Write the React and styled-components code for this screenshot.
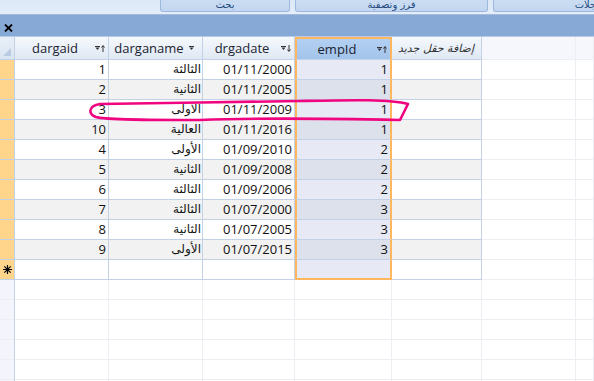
import React from "react";
import styled, { createGlobalStyle } from "styled-components";

const GlobalStyle = createGlobalStyle`
  html, body { margin: 0; padding: 0; background: #fff; overflow: hidden; }
  body { font-family: "Open Sans", "DejaVu Sans", sans-serif; }
`;

const COLS = "15px 94px 94px 92px 97px 90px 94px 1fr";
const LINE = "#c3d1e6";
const FAINT = "#eceef3";
const ORANGE = "#ffb65c";

const rows = [
  [1, "الثالثة", "01/11/2000", 1],
  [2, "الثانية", "01/11/2005", 1],
  [3, "الاولى", "01/11/2009", 1],
  [10, "العالية", "01/11/2016", 1],
  [4, "الأولى", "01/09/2010", 2],
  [5, "الثانية", "01/09/2008", 2],
  [6, "الثالثة", "01/09/2006", 2],
  [7, "الثالثة", "01/07/2000", 3],
  [8, "الثانية", "01/07/2005", 3],
  [9, "الأولى", "01/07/2015", 3],
];

const Page = styled.div`
  position: relative;
  width: 594px;
  height: 381px;
  overflow: hidden;
  background: #fff;
`;

const Ribbon = styled.div`
  display: flex;
  gap: 5px;
  height: 14px;
  padding-left: 160px;
  background: linear-gradient(#dbe8f7, #e4eefa);
  border-bottom: 1px solid #a4bad8;
`;

const RibbonTab = styled.div`
  flex-shrink: 0;
  width: ${p => p.$w}px;
  height: 12px;
  box-sizing: border-box;
  background: linear-gradient(#cbddf2, #c2d7f0);
  border: 1px solid #9db8dc;
  border-top: none;
  border-radius: 0 0 3px 3px;
  color: #24497f;
  font-family: "DejaVu Sans", sans-serif;
  font-size: 10px;
  line-height: 10px;
  text-align: center;
  direction: rtl;
  overflow: hidden;
`;

const DocBar = styled.div`
  display: flex;
  align-items: flex-end;
  height: 22px;
  padding: 0 0 4px 4px;
  box-sizing: border-box;
  background: #87a9d6;
  border-bottom: 1px solid #b7cbe6;
`;

const Row = styled.div`
  display: grid;
  grid-template-columns: ${COLS};
  height: ${p => p.$h || 20}px;
`;

const Corner = styled.div`
  position: relative;
  box-sizing: border-box;
  background: linear-gradient(#e9eff8, #d9e4f2);
  border-right: 1px solid ${LINE};
  border-bottom: 1px solid ${LINE};
`;

const HeadCell = styled.div`
  display: flex;
  align-items: center;
  box-sizing: border-box;
  padding-right: 3px;
  background: ${p =>
    p.$sel
      ? "linear-gradient(#b3d0f1, #a3c4eb)"
      : p.$blank
      ? "#f5f7fc"
      : "linear-gradient(#f6f9fd, #dfe8f4)"};
  border-right: ${p => (p.$sel ? `2px solid ${ORANGE}` : `1px solid ${p.$blank ? FAINT : LINE}`)};
  border-left: ${p => (p.$sel ? `2px solid ${ORANGE}` : "none")};
  border-top: ${p => (p.$sel ? `2px solid ${ORANGE}` : "none")};
  border-bottom: 1px solid ${p => (p.$blank ? FAINT : LINE)};
  color: #1b2330;
  font-size: 13px;
`;

const Label = styled.span`
  flex: 1;
  text-align: center;
  white-space: nowrap;
  overflow: hidden;
`;

const AddLabel = styled.span`
  flex: 1;
  padding-right: 4px;
  direction: rtl;
  text-align: right;
  font-family: "DejaVu Sans", sans-serif;
  font-style: italic;
  font-size: 11px;
  color: #333;
  white-space: nowrap;
`;

const Selector = styled.div`
  display: flex;
  align-items: center;
  justify-content: center;
  box-sizing: border-box;
  background: ${p => (p.$empty ? "#f4f5fc" : "#ffd58c")};
  border-right: 1px solid ${LINE};
  border-bottom: 1px solid ${p => (p.$empty ? FAINT : LINE)};
`;

const Cell = styled.div`
  box-sizing: border-box;
  padding: 0 2px;
  line-height: 19px;
  text-align: right;
  white-space: nowrap;
  overflow: hidden;
  font-size: 13px;
  color: #111;
  background: ${p => (p.$sel ? (p.$alt ? "#dde1ec" : "#e7eaf5") : p.$alt ? "#f2f2f2" : "#fff")};
  border-right: ${p => (p.$sel ? `2px solid ${ORANGE}` : `1px solid ${p.$faint ? FAINT : LINE}`)};
  border-left: ${p => (p.$sel ? `2px solid ${ORANGE}` : "none")};
  border-bottom: ${p =>
    p.$last ? `2px solid ${ORANGE}` : `1px solid ${p.$faint ? FAINT : LINE}`};
`;

const ArabicCell = styled(Cell)`
  direction: rtl;
  text-align: right;
  padding: 0 1px;
  font-family: "DejaVu Sans", sans-serif;
  font-size: 12px;
`;

const Overlay = styled.svg`
  position: absolute;
  left: 0;
  top: 0;
  pointer-events: none;
`;

const SortIcon = ({ dir }) => (
  <svg width="10" height="10" viewBox="0 0 10 10">
    <path d="M0 3.5 H5" stroke="#333" strokeWidth="1" />
    <path d="M0.5 4.5 H4.5 L2.5 7 Z" fill="#333" />
    {dir === "up" && (
      <>
        <path d="M8 3 V9" stroke="#333" strokeWidth="1" />
        <path d="M6.5 4.5 L8 2.5 L9.5 4.5" stroke="#333" strokeWidth="1" fill="none" />
      </>
    )}
    {dir === "down" && (
      <>
        <path d="M8 2 V8" stroke="#333" strokeWidth="1" />
        <path d="M6.5 6.5 L8 8.5 L9.5 6.5" stroke="#333" strokeWidth="1" fill="none" />
      </>
    )}
  </svg>
);

const Star = () => (
  <svg width="11" height="11" viewBox="0 0 11 11">
    <path
      d="M5.5 1 V10 M1 5.5 H10 M2.3 2.3 L8.7 8.7 M8.7 2.3 L2.3 8.7"
      stroke="#000"
      strokeWidth="1.2"
    />
  </svg>
);

const Close = () => (
  <svg width="9" height="8" viewBox="0 0 9 8">
    <path d="M1 0.5 L8 7.5 M8 0.5 L1 7.5" stroke="#000" strokeWidth="1.8" />
  </svg>
);

const BlankCells = ({ faint }) => (
  <>
    <Cell $faint={faint} />
    <Cell $faint={faint} />
    <Cell $faint={faint} />
    <Cell $faint={faint} />
    <Cell $faint={faint} />
    <Cell $faint />
    <Cell $faint />
  </>
);

export default function App() {
  return (
    <Page>
      <GlobalStyle />
      <Ribbon>
        <RibbonTab $w={130}>بحث</RibbonTab>
        <RibbonTab $w={193}>فرز وتصفية</RibbonTab>
        <RibbonTab $w={200}>السجلات</RibbonTab>
      </Ribbon>
      <DocBar>
        <Close />
      </DocBar>

      <Row $h={23}>
        <Corner>
          <svg width="10" height="10" viewBox="0 0 10 10" style={{ position: "absolute", right: 2, bottom: 2 }}>
            <path d="M9 1 V9 H1 Z" fill="#b9cbe3" />
          </svg>
        </Corner>
        <HeadCell>
          <Label>dargaid</Label>
          <SortIcon dir="up" />
        </HeadCell>
        <HeadCell>
          <Label>darganame</Label>
          <SortIcon />
        </HeadCell>
        <HeadCell>
          <Label>drgadate</Label>
          <SortIcon dir="down" />
        </HeadCell>
        <HeadCell $sel>
          <Label>empId</Label>
          <SortIcon dir="up" />
        </HeadCell>
        <HeadCell>
          <AddLabel>إضافة حقل جديد</AddLabel>
        </HeadCell>
        <HeadCell $blank />
        <HeadCell $blank />
      </Row>

      {rows.map(([id, name, date, emp], i) => {
        const alt = i % 2 === 1;
        return (
          <Row key={i}>
            <Selector />
            <Cell $alt={alt}>{id}</Cell>
            <ArabicCell $alt={alt}>{name}</ArabicCell>
            <Cell $alt={alt}>{date}</Cell>
            <Cell $alt={alt} $sel>{emp}</Cell>
            <Cell $alt={alt} />
            <Cell $faint />
            <Cell $faint />
          </Row>
        );
      })}

      <Row>
        <Selector>
          <Star />
        </Selector>
        <Cell />
        <Cell />
        <Cell />
        <Cell $sel $last />
        <Cell />
        <Cell $faint />
        <Cell $faint />
      </Row>

      {[0, 1, 2, 3, 4, 5].map(i => (
        <Row key={i}>
          <Selector $empty />
          <BlankCells faint />
        </Row>
      ))}

      <Overlay width="594" height="381" viewBox="0 0 594 381">
        <path
          d="M100 104 C150 103, 250 102, 300 101 C350 100, 390 99, 408 104 L400 120 C350 119, 250 118, 200 120 C150 120, 105 120, 96 117 C88 114, 88 106, 100 104 Z"
          fill="none"
          stroke="#f0047f"
          strokeWidth="2.6"
          strokeLinejoin="round"
        />
      </Overlay>
    </Page>
  );
}
